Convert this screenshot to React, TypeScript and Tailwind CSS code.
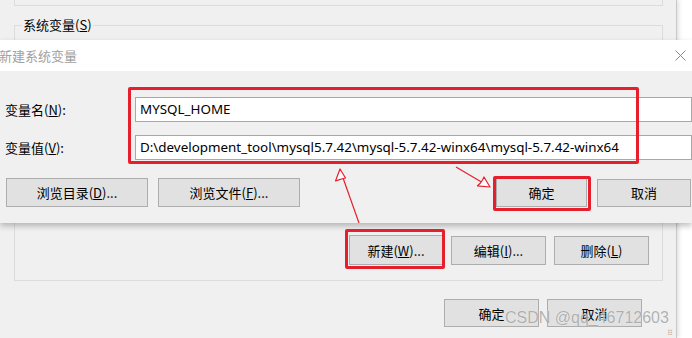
import React from "react";

const cjk = { fontFamily: '"Noto Sans CJK SC", "Noto Sans", sans-serif' };
const latin = { fontFamily: '"Noto Sans", "Noto Sans CJK SC", sans-serif' };

function Btn({ children, className = "" }: { children: React.ReactNode; className?: string }) {
  return (
    <div
      className={`flex items-center justify-center bg-[#e1e1e1] border border-[#adadad] text-[13px] text-black leading-none ${className}`}
      style={cjk}
    >
      {children}
    </div>
  );
}

export default function App() {
  return (
    <div className="relative w-[692px] h-[338px] overflow-hidden bg-white">
      {/* background window */}
      <div className="relative w-[677px] h-[338px] bg-[#f0f0f0] border-r border-[#c8c8c8] shadow-[2px_0_4px_rgba(0,0,0,0.12)]">
        <div className="ml-[14px] w-[649px] h-[6px] border-x border-b border-[#dcdcdc]" />
        <div className="relative mt-[19px] ml-[14px] w-[649px] h-[256px] border border-[#dcdcdc] flex justify-end items-end pr-[13px] pb-[15px] gap-[8px]">
          <span className="absolute -top-[10px] left-[7px] bg-[#f0f0f0] px-[1px] text-[13px] leading-[18px] text-black" style={cjk}>
            系统变量(<u>S</u>)
          </span>
          <Btn className="w-[94px] h-[30px]">新建(<u>W</u>)...</Btn>
          <Btn className="w-[95px] h-[29px]">编辑(<u>I</u>)...</Btn>
          <Btn className="w-[95px] h-[29px]">删除(<u>L</u>)</Btn>
        </div>
        <div className="flex justify-end gap-[8px] pr-[34px] mt-[18px]">
          <Btn className="w-[95px] h-[28px]">确定</Btn>
          <Btn className="w-[95px] h-[28px]">取消</Btn>
        </div>
        <div className="absolute right-[3px] bottom-[1px] text-[#b0b0b0] text-[8px] leading-none">⠿</div>
      </div>

      {/* dialog */}
      <div className="absolute left-0 top-[40px] w-[692px] h-[183px] flex flex-col shadow-[0_3px_6px_rgba(0,0,0,0.25)]">
        <div className="h-[31px] bg-white flex items-center justify-between pl-0 pr-[6px]">
          <span className="text-[13px] text-[#a0a0a0] -ml-[1px]" style={cjk}>新建系统变量</span>
          <svg width="11" height="11" viewBox="0 0 11 11">
            <path d="M0.5 0.5 L10.5 10.5 M10.5 0.5 L0.5 10.5" stroke="#8a8a8a" strokeWidth="1" />
          </svg>
        </div>
        <div className="relative flex-1 bg-[#f0f0f0] pt-[26px] flex flex-col">
          <div className="flex items-center h-[25px]">
            <span className="w-[135px] pl-[5px] text-[13px] text-black" style={cjk}>变量名(<u>N</u>):</span>
            <div className="flex-1 h-[25px] bg-white border border-[#a8a8a8] flex items-center pl-[4px] text-[13.4px] text-black" style={latin}>
              MYSQL_HOME
            </div>
          </div>
          <div className="flex items-center h-[25px] mt-[13px]">
            <span className="w-[135px] pl-[5px] text-[13px] text-black" style={cjk}>变量值(<u>V</u>):</span>
            <div className="flex-1 h-[25px] bg-white border border-[#a8a8a8] flex items-center pl-[4px] text-[13.4px] text-black whitespace-nowrap" style={latin}>
              D:\development_tool\mysql5.7.42\mysql-5.7.42-winx64\mysql-5.7.42-winx64
            </div>
          </div>
          <div className="flex items-center mt-[18px] pl-[6px] pr-[1px]">
            <Btn className="w-[142px] h-[29px]">浏览目录(<u>D</u>)...</Btn>
            <Btn className="w-[142px] h-[29px] ml-[10px]">浏览文件(<u>F</u>)...</Btn>
            <div className="flex-1" />
            <Btn className="w-[91px] h-[29px]">确定</Btn>
            <Btn className="w-[94px] h-[28px] ml-[10px]">取消</Btn>
          </div>
          {/* red highlight on inputs */}
          <div className="absolute left-[128px] top-[16px] w-[511px] h-[77px] border-[3px] border-[#e5202c] rounded-[2px]" />
        </div>
      </div>

      {/* red highlight boxes over buttons */}
      <div className="absolute left-[493px] top-[176px] w-[98px] h-[35px] border-[3px] border-[#e5202c] rounded-[2px]" />
      <div className="absolute left-[345px] top-[229px] w-[100px] h-[40px] border-[3px] border-[#e5202c] rounded-[2px]" />

      {/* arrows */}
      <svg className="absolute inset-0 pointer-events-none" width="692" height="338" viewBox="0 0 692 338">
        <g stroke="#e5202c" strokeWidth="1.2" fill="none" strokeLinejoin="round">
          <path d="M359 223 L342.5 176.5" />
          <path d="M340 169 L335.5 181 L339.5 179.6 L341.5 179 L345.5 178 Z" fill="#fff" />
          <path d="M456 167 L484 183.5" />
          <path d="M490 187 L477.5 185.8 L480.5 183 L482.5 180 L484 177 Z" fill="#fff" />
        </g>
      </svg>

      {/* watermark */}
      <div
        className="absolute left-[505px] top-[308px] text-[16px] leading-[20px] text-[rgba(150,150,150,0.75)] whitespace-nowrap [text-shadow:0_0_1px_rgba(255,255,255,0.9)]"
        style={{ fontFamily: '"Liberation Sans", Arial, sans-serif' }}
      >
        CSDN @qq_46712603
      </div>
    </div>
  );
}
